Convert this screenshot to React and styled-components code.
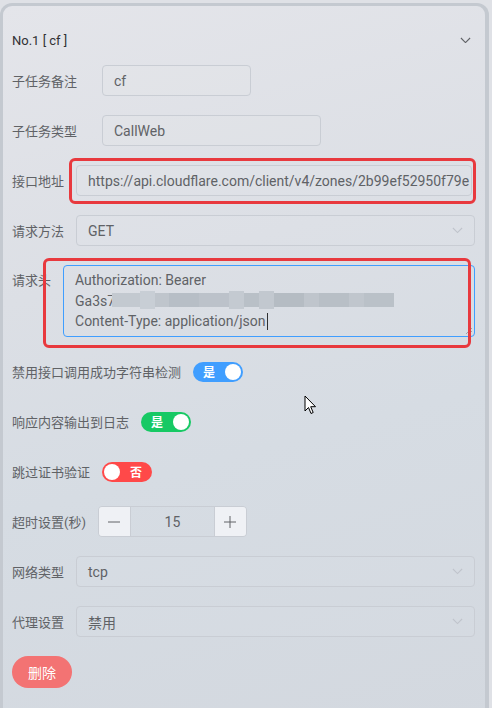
import React from 'react'
import styled, { createGlobalStyle } from 'styled-components'

const GlobalStyle = createGlobalStyle`
  html, body {
    margin: 0;
    padding: 0;
    background: #dfe1e6;
    overflow: hidden;
  }
  body {
    font-family: Roboto, "Noto Sans CJK SC", sans-serif;
    color: #606266;
  }
`

const Page = styled.div`
  width: 492px;
  height: 708px;
  padding-top: 3px;
  box-sizing: border-box;
  position: relative;
  overflow: hidden;
`

const Card = styled.div`
  width: 489px;
  box-sizing: border-box;
  border: 3px solid #c4c9d0;
  border-right-width: 4px;
  border-bottom: none;
  border-radius: 12px 12px 0 0;
  background: linear-gradient(165deg, #e4e5ea 0%, #dcdfe5 35%, #d6dce3 60%, #d3d8df 100%);
  padding: 18px 10px 40px 9px;
  min-height: 720px;
`

const Header = styled.div`
  display: flex;
  align-items: center;
  justify-content: space-between;
  height: 32px;
  font-size: 13px;
  color: #303133;
  padding-right: 4px;
  margin-bottom: 9px;
`

const Form = styled.div`
  display: flex;
  flex-direction: column;
  gap: 19px;
`

const Row = styled.div`
  position: relative;
  display: flex;
  align-items: ${(p) => (p.top ? 'flex-start' : 'center')};
  min-height: 31px;
  gap: 12px;
`

const Label = styled.div`
  font-size: 13px;
  color: #606266;
  white-space: nowrap;
  flex: none;
  width: ${(p) => (p.width ? `${p.width}px` : 'auto')};
  margin-right: ${(p) => (p.width ? '-12px' : '0')};
  line-height: ${(p) => (p.top ? '31px' : 'normal')};
`

const Input = styled.div`
  box-sizing: border-box;
  height: 31px;
  width: ${(p) => (p.width ? `${p.width}px` : 'auto')};
  flex: ${(p) => (p.width ? 'none' : '1')};
  margin-right: ${(p) => (p.gapRight ? `${p.gapRight}px` : '0')};
  border: 1px solid #c9cdd4;
  border-radius: 4px;
  padding: 0 11px;
  display: flex;
  align-items: center;
  justify-content: space-between;
  font-size: 14px;
  color: #606266;
  white-space: nowrap;
  overflow: hidden;
  background: rgba(255, 255, 255, 0.04);
`

const TextArea = styled.div`
  position: relative;
  flex: 1;
  box-sizing: border-box;
  height: 72px;
  border: 1px solid #409eff;
  border-radius: 4px;
  padding: 4px 11px;
  font-size: 14px;
  line-height: 20.5px;
  color: #606266;
`

const Line = styled.div`
  display: flex;
  align-items: center;
  height: 20.5px;
  white-space: nowrap;
`

const Blur = styled.span`
  display: inline-flex;
  align-items: flex-start;
  height: 20px;
  margin-left: -3px;
`

const Block = styled.span`
  display: inline-block;
  width: ${(p) => p.w}px;
  height: ${(p) => p.h}px;
  margin-top: ${(p) => p.t}px;
  background: ${(p) => p.c};
`

const Caret = styled.span`
  display: inline-block;
  width: 1px;
  height: 17px;
  background: #303133;
  margin-left: 1px;
`

const Resize = styled.svg`
  position: absolute;
  right: 1px;
  bottom: 1px;
`

const Highlight = styled.div`
  position: absolute;
  box-sizing: border-box;
  left: ${(p) => p.left}px;
  top: ${(p) => p.top}px;
  width: ${(p) => p.width}px;
  height: ${(p) => p.height}px;
  border: 3px solid #e8393e;
  border-radius: 6px;
  pointer-events: none;
`

const Switch = styled.div`
  position: relative;
  width: 50px;
  height: 20px;
  border-radius: 10px;
  background: ${(p) => p.color};
  display: flex;
  align-items: center;
  flex-direction: ${(p) => (p.on ? 'row' : 'row-reverse')};
  justify-content: space-between;
  padding-left: ${(p) => (p.on ? '10px' : '2px')};
  padding-right: ${(p) => (p.on ? '2px' : '10px')};
  box-sizing: border-box;
`

const SwitchText = styled.span`
  font-size: 12px;
  font-weight: 700;
  color: #fff;
`

const Knob = styled.span`
  width: 16px;
  height: 16px;
  border-radius: 50%;
  background: #fff;
`

const Number = styled.div`
  display: flex;
  box-sizing: border-box;
  width: 149px;
  height: 31px;
  border: 1px solid #c9cdd4;
  border-radius: 4px;
  overflow: hidden;
`

const StepBtn = styled.div`
  width: 31px;
  display: flex;
  align-items: center;
  justify-content: center;
  background: #eff1f5;
  border-left: ${(p) => (p.right ? '1px solid #c9cdd4' : 'none')};
  border-right: ${(p) => (p.right ? 'none' : '1px solid #c9cdd4')};
`

const NumValue = styled.div`
  flex: 1;
  display: flex;
  align-items: center;
  justify-content: center;
  font-size: 14px;
  color: #606266;
`

const DeleteBtn = styled.button`
  width: 60px;
  height: 32px;
  border: none;
  border-radius: 16px;
  background: #f37373;
  color: #fff;
  font-family: Roboto, "Noto Sans CJK SC", sans-serif;
  font-size: 14px;
  padding: 0;
`

const Cursor = styled.svg`
  position: absolute;
  left: 304px;
  top: 395px;
`

const Chevron = ({ color = '#c0c4cc', size = 11 }) => (
  <svg width={size} height={size * 0.6} viewBox="0 0 12 7">
    <path d="M1 1l5 5 5-5" fill="none" stroke={color} strokeWidth="1.2" />
  </svg>
)

const Toggle = ({ on, color, text }) => (
  <Switch on={on} color={color}>
    <SwitchText>{text}</SwitchText>
    <Knob />
  </Switch>
)

const blocks = [
  { w: 28, h: 14, t: 2, c: '#c3c9d0' },
  { w: 15, h: 18, t: 0, c: '#c8ced5' },
  { w: 14, h: 14, t: 2, c: '#bfc5cc' },
  { w: 30, h: 14, t: 2, c: '#b7bec6' },
  { w: 30, h: 14, t: 2, c: '#bcc2ca' },
  { w: 15, h: 18, t: 0, c: '#c4cad1' },
  { w: 15, h: 14, t: 2, c: '#b9c0c7' },
  { w: 15, h: 18, t: 0, c: '#c2c8cf' },
  { w: 30, h: 14, t: 2, c: '#b5bcc3' },
  { w: 15, h: 14, t: 2, c: '#bfc5cc' },
  { w: 30, h: 14, t: 2, c: '#b8bfc6' },
  { w: 15, h: 14, t: 2, c: '#c0c6cd' },
  { w: 30, h: 14, t: 2, c: '#bac1c8' },
]

const App = () => (
  <Page>
    <GlobalStyle />
    <Card>
      <Header>
        <span>No.1 [ cf ]</span>
        <Chevron color="#606266" size={11} />
      </Header>
      <Form>
        <Row>
          <Label width={90}>子任务备注</Label>
          <Input width={149}>cf</Input>
        </Row>
        <Row>
          <Label width={90}>子任务类型</Label>
          <Input width={219}>CallWeb</Input>
        </Row>
        <Row>
          <Label>接口地址</Label>
          <Input gapRight={3}>https://api.cloudflare.com/client/v4/zones/2b99ef52950f79e</Input>
          <Highlight left={57} top={-7} width={407} height={46} />
        </Row>
        <Row>
          <Label>请求方法</Label>
          <Input>
            GET
            <Chevron />
          </Input>
        </Row>
        <Row top>
          <Label top>请求头</Label>
          <TextArea>
            <Line>Authorization: Bearer</Line>
            <Line>
              Ga3s7
              <Blur>
                {blocks.map((b, i) => (
                  <Block key={i} {...b} />
                ))}
              </Blur>
            </Line>
            <Line>
              Content-Type: application/json
              <Caret />
            </Line>
            <Resize width="8" height="8" viewBox="0 0 8 8">
              <path d="M1 7L7 1M4 7L7 4" stroke="#909399" strokeWidth="0.8" />
            </Resize>
          </TextArea>
          <Highlight left={31} top={-7} width={428} height={90} />
        </Row>
        <Row>
          <Label>禁用接口调用成功字符串检测</Label>
          <Toggle on color="#409eff" text="是" />
        </Row>
        <Row>
          <Label>响应内容输出到日志</Label>
          <Toggle on color="#17c964" text="是" />
        </Row>
        <Row>
          <Label>跳过证书验证</Label>
          <Toggle color="#ff4949" text="否" />
        </Row>
        <Row>
          <Label>超时设置(秒)</Label>
          <Number>
            <StepBtn>
              <svg width="12" height="12" viewBox="0 0 12 12">
                <path d="M0 6h12" stroke="#606266" strokeWidth="1" />
              </svg>
            </StepBtn>
            <NumValue>15</NumValue>
            <StepBtn right>
              <svg width="12" height="12" viewBox="0 0 12 12">
                <path d="M0 6h12M6 0v12" stroke="#606266" strokeWidth="1" />
              </svg>
            </StepBtn>
          </Number>
        </Row>
        <Row>
          <Label>网络类型</Label>
          <Input>
            tcp
            <Chevron />
          </Input>
        </Row>
        <Row>
          <Label>代理设置</Label>
          <Input>
            禁用
            <Chevron />
          </Input>
        </Row>
        <Row>
          <DeleteBtn>删除</DeleteBtn>
        </Row>
      </Form>
    </Card>
    <Cursor width="13" height="20" viewBox="0 0 13 20">
      <path d="M1 1v15l3.5-3.5 2.5 6 2.2-1-2.5-5.8H11.5z" fill="#fff" stroke="#000" strokeWidth="1" strokeLinejoin="round" />
    </Cursor>
  </Page>
)

export default App
